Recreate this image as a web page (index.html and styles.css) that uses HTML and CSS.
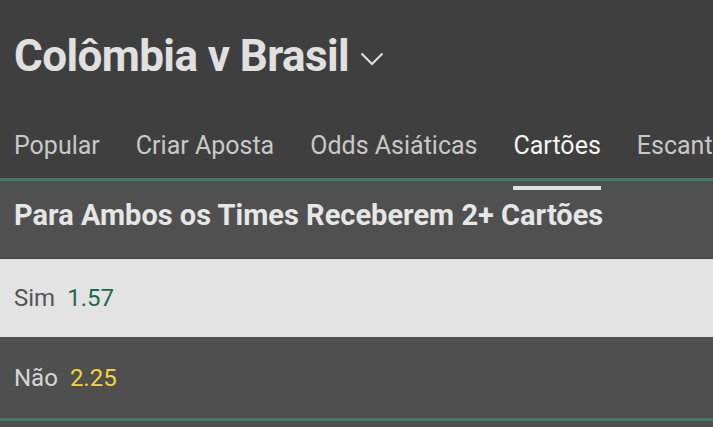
FILE: index.html
```html
<!DOCTYPE html>
<html lang="pt">
<head>
    <meta charset="UTF-8">
    <meta name="viewport" content="width=device-width, initial-scale=1.0">
    <title>Colômbia v Brasil</title>
    <link rel="stylesheet" href="styles.css">
</head>
<body>
    <div class="header">
        <div class="match">
            <h1>Colômbia v Brasil</h1>
            <svg class="chevron" width="24" height="14" viewBox="0 0 24 14">
                <polyline points="1.5,1.5 12,12 22.5,1.5" fill="none" stroke="#e0e0e0" stroke-width="2"/>
            </svg>
        </div>
        <div class="tabs">
            <span class="tab">Popular</span>
            <span class="tab">Criar Aposta</span>
            <span class="tab">Odds Asiáticas</span>
            <span class="tab active">Cartões</span>
            <span class="tab">Escanteios</span>
        </div>
    </div>

    <div class="market">
        <h2>Para Ambos os Times Receberem 2+ Cartões</h2>
        <div class="option light">
            <span class="name">Sim</span>
            <span class="odds">1.57</span>
        </div>
        <div class="option dark">
            <span class="name">Não</span>
            <span class="odds">2.25</span>
        </div>
    </div>
</body>
</html>
```

FILE: styles.css
```css
body {
    margin: 0;
    font-family: Roboto, "Noto Sans", sans-serif;
    background-color: #4f4f4f;
    overflow: hidden;
}
.header {
    position: relative;
    z-index: 1;
    background-color: #3f3f3f;
    border-bottom: 3px solid #427a65;
}
.match {
    display: flex;
    align-items: center;
    height: 112px;
    padding-left: 14px;
}
h1 {
    margin: 0;
    font-size: 44px;
    font-weight: bold;
    letter-spacing: -0.6px;
    color: #e0e0e0;
}
.chevron {
    margin-left: 11px;
    margin-top: 6px;
}
.tabs {
    display: flex;
    gap: 36px;
    height: 66px;
    padding-left: 14px;
    white-space: nowrap;
    overflow-x: clip;
    overflow-y: visible;
}
.tab {
    position: relative;
    flex-shrink: 0;
    font-size: 25px;
    line-height: 68px;
    color: #c8c8c8;
}
.tab.active {
    color: #f4f4f4;
}
.tab.active::after {
    content: "";
    position: absolute;
    left: 0;
    right: 0;
    bottom: -12px;
    height: 4px;
    background-color: #e2e2e2;
}
h2 {
    margin: 0;
    height: 77px;
    padding-left: 14px;
    font-size: 29px;
    font-weight: bold;
    line-height: 68px;
    color: #e6e6e6;
    background-color: #505050;
    border-bottom: 1px solid #444444;
}
.option {
    display: flex;
    align-items: center;
    gap: 12px;
    padding-left: 14px;
    font-size: 24px;
}
.option.light {
    height: 78px;
    background-color: #e3e3e3;
}
.option.light .name {
    color: #555555;
}
.option.light .odds {
    color: #1d6b4d;
}
.option.dark {
    height: 81px;
    background-color: #4f4f4f;
    border-bottom: 3px solid #427a65;
}
.option.dark .name {
    color: #d6d6d6;
}
.option.dark .odds {
    color: #f2d33a;
}
```
